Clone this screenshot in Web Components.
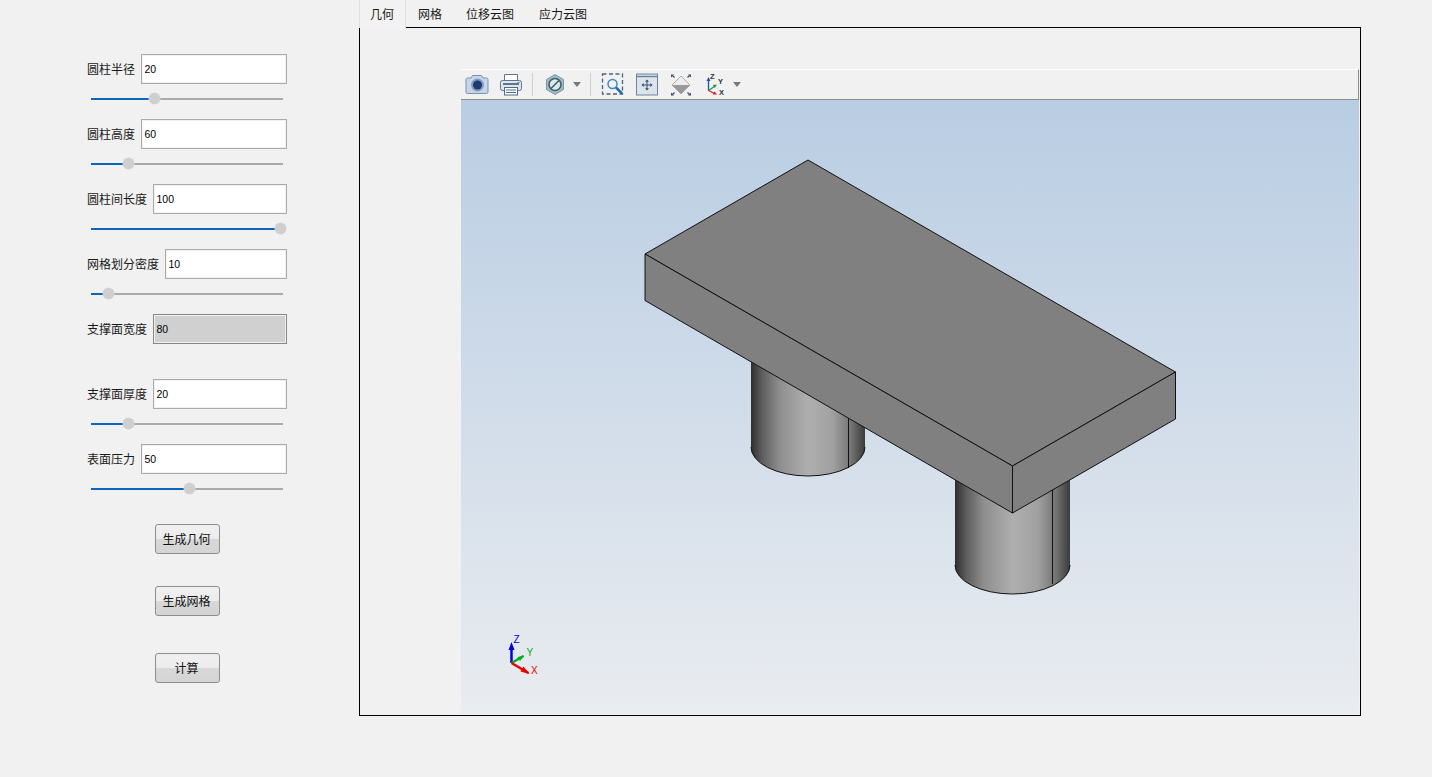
<!DOCTYPE html>
<html lang="zh">
<head>
<meta charset="utf-8">
<title>几何</title>
<style>
  html, body { margin: 0; height: 100%; background: #f1f1f1; overflow: hidden; }
  body { font: 12px "Noto Sans CJK SC", "Liberation Sans", sans-serif; color: #000; }
</style>
</head>
<body>
<cae-app>
  <param-panel slot="left">
    <param-field label="圆柱半径" value="20" pos="33"></param-field>
    <param-field label="圆柱高度" value="60" pos="19.5"></param-field>
    <param-field label="圆柱间长度" value="100" pos="98.5"></param-field>
    <param-field label="网格划分密度" value="10" pos="9"></param-field>
    <param-field label="支撑面宽度" value="80" disabled></param-field>
    <param-field label="支撑面厚度" value="20" pos="19.5"></param-field>
    <param-field label="表面压力" value="50" pos="51.5"></param-field>
    <push-button style="margin-top:15px">生成几何</push-button>
    <push-button style="margin-top:32px">生成网格</push-button>
    <push-button style="margin-top:37px">计算</push-button>
  </param-panel>
  <tab-view slot="right">
    <view-toolbar></view-toolbar>
    <model-view></model-view>
  </tab-view>
</cae-app>

<script>
class CaeApp extends HTMLElement {
  constructor () {
    super()
    this.attachShadow({ mode: 'open' }).innerHTML = `
      <style>
        :host { display: flex; height: 777px; }
        .left { flex: 0 0 359px; }
        .right { flex: 0 0 1002px; }
      </style>
      <div class="left"><slot name="left"></slot></div>
      <div class="right"><slot name="right"></slot></div>`
  }
}

class ParamPanel extends HTMLElement {
  constructor () {
    super()
    this.attachShadow({ mode: 'open' }).innerHTML = `
      <style>
        :host { display: flex; flex-direction: column; align-items: center; width: 200px; margin-left: 87px; padding-top: 54px; }
      </style>
      <slot></slot>`
  }
}

class ParamField extends HTMLElement {
  constructor () {
    super()
    this.attachShadow({ mode: 'open' })
  }

  connectedCallback () {
    const label = this.getAttribute('label')
    const value = this.getAttribute('value')
    const pos = this.getAttribute('pos')
    const off = this.hasAttribute('disabled')
    this.shadowRoot.innerHTML = `
      <style>
        :host { display: block; width: 200px; height: 65px; }
        .row { display: flex; align-items: center; gap: 6px; height: 30px; }
        .label { white-space: nowrap; color: #1a1a1a; padding-bottom: 2px; }
        .box {
          flex: 1; height: 28px; padding-left: 2.5px;
          border: 1px solid #ababab; box-shadow: inset 0 0 0 1px #f1f1f1;
          background: #fff; font: 10.5px/28px "Liberation Sans", sans-serif;
        }
        .box.off { border-color: #868686; background: #d0d0d0; }
        .slider { position: relative; height: 2px; margin: 14px 4px 0; background: #aaa; width: 192px; }
        .fill { height: 2px; background: #0a66b8; }
        .knob {
          position: absolute; top: -5px; width: 11px; height: 11px; margin-left: -5.5px;
          border-radius: 50%; background: #cfcfcf; box-shadow: 0 0 0 .5px #d8d8d8;
        }
      </style>
      <div class="row"><span class="label">${label}</span><div class="box ${off ? 'off' : ''}">${value}</div></div>
      ${off ? '' : `<div class="slider"><div class="fill" style="width:${pos}%"></div><div class="knob" style="left:${pos}%"></div></div>`}`
  }
}

class PushButton extends HTMLElement {
  constructor () {
    super()
    this.attachShadow({ mode: 'open' }).innerHTML = `
      <style>
        :host {
          display: flex; align-items: center; justify-content: center; box-sizing: border-box;
          width: 65px; height: 30px; padding: 0 1px 2px 0; border: 1px solid #8e8e8e; border-radius: 3px; color: #111;
          background: linear-gradient(#f0f0f0 0, #ececec 50%, #d8d8d8 51%, #d4d4d4 100%);
        }
      </style>
      <slot></slot>`
  }
}

class TabView extends HTMLElement {
  constructor () {
    super()
    this.attachShadow({ mode: 'open' }).innerHTML = `
      <style>
        :host { display: flex; flex-direction: column; height: 716px; }
        .tabs { display: flex; height: 27px; flex: none; position: relative; z-index: 1; color: #1a1a1a; }
        .tab { display: flex; align-items: center; height: 27px; padding: 0 12px; }
        .tab.on { height: 28px; padding: 0 11px 1px 10px; box-sizing: border-box; width: 47px; background: #f2f2f2; border: solid #e0e0e0; border-width: 0 1px; }
        .tab:nth-child(4) { margin-left: 1px; }
        .pane { flex: 1; border: 1px solid #000; padding: 41px 1px 1px 101px; display: flex; flex-direction: column; min-height: 0; }
      </style>
      <div class="tabs">
        <div class="tab on">几何</div>
        <div class="tab">网格</div>
        <div class="tab">位移云图</div>
        <div class="tab">应力云图</div>
      </div>
      <div class="pane"><slot></slot></div>`
  }
}

class ViewToolbar extends HTMLElement {
  constructor () {
    super()
    this.attachShadow({ mode: 'open' }).innerHTML = `
      <style>
        :host {
          display: flex; align-items: center; flex: none; height: 29px; width: 897px;
          background: #f1f1f1; border-top: 1px solid #fff; border-bottom: 1px solid #8c8c8c; border-right: 1px solid #8c8c8c;
        }
        svg { display: block; flex: none; width: 32px; height: 24px; }
        .sep { flex: none; width: 1px; height: 23px; background: #cfcfcf; }
        .caret { flex: none; width: 0; height: 0; border: 4.5px solid transparent; border-top: 5px solid #777; border-bottom: 0; }
      </style>
      <svg viewBox="0 0 32 24">
        <path d="M6.500 5h3.500l1.500-2.500h9l1.500 2.500h3.500a1.500 1.500 0 0 1 1.500 1.500v12.500a1.500 1.500 0 0 1-1.500 1.500h-19a1.500 1.500 0 0 1-1.500-1.500v-12.500a1.500 1.500 0 0 1 1.500-1.500z" fill="#c4d6e8" stroke="#7d93ab"/>
        <circle cx="16.500" cy="12" r="6.500" fill="#7f9cc0"/><circle cx="16.500" cy="12" r="4.500" fill="#1f3a6e"/>
      </svg>
      <svg viewBox="0 0 32 24" style="margin-left:2px">
        <path d="M9.500 8V1.500h13V8" fill="#fff" stroke="#5f7590"/>
        <rect x="5.500" y="7.500" width="21" height="10" rx="2" fill="#dfe6ee" stroke="#5f7590"/>
        <rect x="8" y="10" width="16" height="2" fill="#5f7590"/>
        <rect x="9.500" y="14.500" width="13" height="7.500" fill="#fff" stroke="#4c6a90"/>
        <path d="M11 17h10M11 19.500h10" stroke="#4c6a90"/><path d="M22 9.500h3" stroke="#8a9cb0"/>
      </svg>
      <div class="sep" style="margin-left:5px"></div>
      <svg viewBox="0 0 32 24" style="margin-left:6px">
        <path d="M16 1.500l8.500 5v10l-8.500 5-8.500-5v-10z" fill="#9fbcc0" stroke="#7c9aa0"/>
        <circle cx="16" cy="11.500" r="6" fill="#dfe8ea" stroke="#3f5f70" stroke-width="1.600"/>
        <path d="M12 15.500l8-8" stroke="#3f5f70" stroke-width="1.600"/>
      </svg>
      <div class="caret" style="margin-left:1.500px"></div>
      <div class="sep" style="margin-left:9px"></div>
      <svg viewBox="0 0 32 24" style="margin-left:5px">
        <rect x="6.500" y="1" width="20" height="20" fill="none" stroke="#4a6482" stroke-width="1.300" stroke-dasharray="4 2.500"/>
        <circle cx="16.500" cy="11" r="4.500" fill="#eef4f9" stroke="#3f88c0" stroke-width="1.500"/>
        <path d="M20 14.500l6 6" stroke="#1f6fb0" stroke-width="2.500"/>
      </svg>
      <svg viewBox="0 0 32 24" style="margin-left:3px">
        <rect x="5.500" y="1" width="21" height="21" fill="#dde3ea" stroke="#6c85a0"/>
        <path d="M5 3.500h22" stroke="#6c85a0" stroke-width="1.500"/>
        <path d="M16 8v8M12 12h8" stroke="#33506e"/>
        <path d="M16 6.500l-2 2.200h4zM16 17.500l-2-2.200h4zM10.500 12l2.200-2v4zM21.500 12l-2.200-2v4z" fill="#33506e"/>
      </svg>
      <svg viewBox="0 0 32 24" style="margin-left:2px">
        <path d="M16 3l9 9h-18z" fill="#ededed"/>
        <path d="M16 21l9-9h-18z" fill="#9a9a9a"/>
        <path d="M16 3l9 9-9 9-9-9z" fill="none" stroke="#9c9c9c" stroke-width=".8"/>
        <path d="M9.500 4.500l-2-2M22.500 4.500l2-2M9.500 19.500l-2 2M22.500 19.500l2 2" stroke="#33506e" stroke-width="1.300"/>
        <path d="M6 1.500h3l-3 3zM26 1.500h-3l3 3zM6 22.500h3l-3-3zM26 22.500h-3l3-3z" fill="#33506e"/>
      </svg>
      <svg viewBox="0 0 32 24" style="margin-left:2px">
        <path d="M9.500 17.500V7" stroke="#1f4fb0" stroke-width="1.300"/><path d="M9.500 4l-2 4h4z" fill="#1f4fb0"/>
        <path d="M9.500 17.500l6-4" stroke="#1e9a4a" stroke-width="1.300"/><path d="M18 11.500l-4.200.6 2 2.800z" fill="#1e9a4a"/>
        <path d="M9.500 17.500l6 3" stroke="#e02020" stroke-width="1.300"/><path d="M18 21.500l-4.300 0 1.800-2.900z" fill="#e02020"/>
        <text x="11" y="6" font-size="7.500" font-family="Liberation Sans" font-weight="700" fill="#333">Z</text>
        <text x="19" y="11" font-size="7.500" font-family="Liberation Sans" font-weight="700" fill="#333">Y</text>
        <text x="20" y="22" font-size="7.500" font-family="Liberation Sans" font-weight="700" fill="#333">X</text>
      </svg>
      <div class="caret" style="margin-left:2.500px"></div>`
  }
}

class ModelView extends HTMLElement {
  constructor () {
    super()
    this.attachShadow({ mode: 'open' }).innerHTML = `
      <style>
        :host { display: block; flex: 1; min-height: 0; width: 898px; background: linear-gradient(#b9cde3, #e9ecf0); }
        svg { display: block; width: 100%; height: 100%; }
        text { font: 10px "Liberation Sans", sans-serif; }
      </style>
      <svg viewBox="461 100 898 614" preserveAspectRatio="none">
        <defs>
          <linearGradient id="cyl">
            <stop offset="0" stop-color="#2e2e2e"/>
            <stop offset=".1" stop-color="#5e5e5e"/>
            <stop offset=".25" stop-color="#8e8e8e"/>
            <stop offset=".5" stop-color="#afafaf"/>
            <stop offset=".72" stop-color="#a0a0a0"/>
            <stop offset=".88" stop-color="#737373"/>
            <stop offset="1" stop-color="#3a3a3a"/>
          </linearGradient>
        </defs>
        <g stroke="#111" stroke-width="1">
          <path d="M751 360V447A57 29 0 0 0 865 447V360z" fill="url(#cyl)" stroke="none"/>
          <path d="M751 447A57 29 0 0 0 865 447" fill="none"/>
          <path d="M848.500 415V468" fill="none"/>
          <path d="M955 478V565A57.500 29 0 0 0 1070 565V478z" fill="url(#cyl)" stroke="none"/>
          <path d="M955 565A57.500 29 0 0 0 1070 565" fill="none"/>
          <path d="M1052.500 488V584" fill="none"/>
          <path d="M808 160L1175.500 372 1012.500 466 645 254z" fill="#808080" stroke-linejoin="round"/>
          <path d="M645 254V300.500L1012.500 513V466z" fill="#808080"/>
          <path d="M1012.500 466L1175.500 372V419L1012.500 513z" fill="#808080"/>
        </g>
        <g>
          <path d="M511.500 663V648" stroke="#0000e0" stroke-width="2.500"/>
          <path d="M511.500 642l-3 8h6z" fill="#0000e0"/>
          <path d="M511.500 663l12-7" stroke="#00b020" stroke-width="2.500"/>
          <path d="M524.500 655.500l-7 1.500 2.500 4z" fill="#00b020"/>
          <path d="M511.500 663l17 10" stroke="#e80000" stroke-width="2.500"/>
          <path d="M529.500 674l-9-2.500 3-5z" fill="#e80000"/>
          <text x="513.500" y="643" fill="#0000e0">Z</text>
          <text x="526.500" y="656" fill="#00b020">Y</text>
          <text x="531" y="674" fill="#e80000">X</text>
        </g>
      </svg>`
  }
}

customElements.define('cae-app', CaeApp)
customElements.define('param-panel', ParamPanel)
customElements.define('param-field', ParamField)
customElements.define('push-button', PushButton)
customElements.define('tab-view', TabView)
customElements.define('view-toolbar', ViewToolbar)
customElements.define('model-view', ModelView)
</script>
</body>
</html>
